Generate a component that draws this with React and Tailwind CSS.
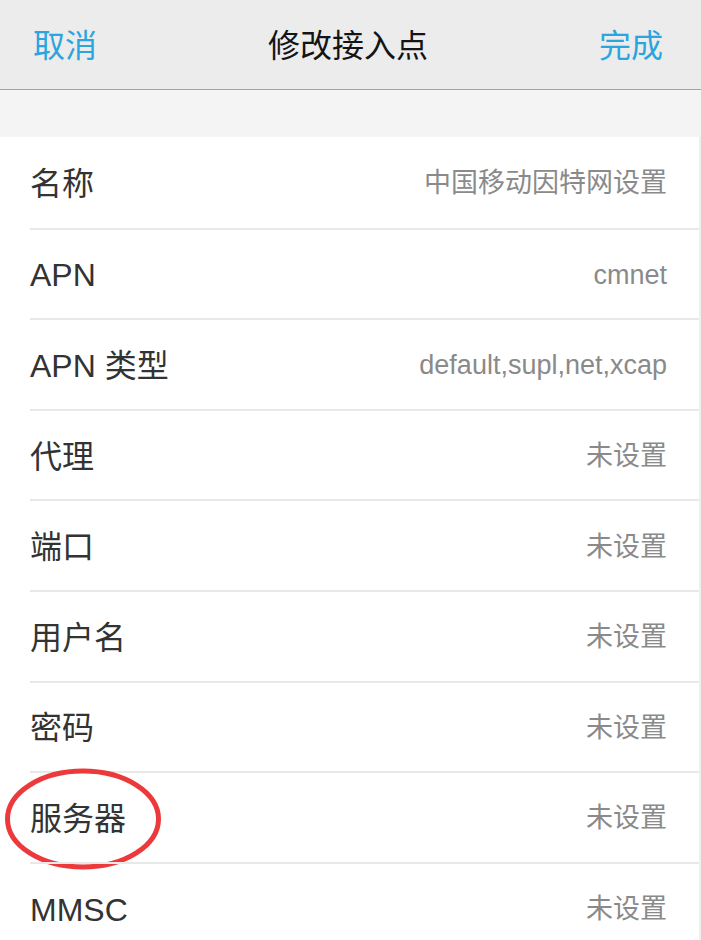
import React from 'react'

const rows = [
  { label: '名称', value: '中国移动因特网设置' },
  { label: 'APN', value: 'cmnet' },
  { label: 'APN 类型', value: 'default,supl,net,xcap' },
  { label: '代理', value: '未设置' },
  { label: '端口', value: '未设置' },
  { label: '用户名', value: '未设置' },
  { label: '密码', value: '未设置' },
  { label: '服务器', value: '未设置', marked: true },
  { label: 'MMSC', value: '未设置' },
]

const font = "font-['Liberation_Sans','Noto_Sans_CJK_SC',sans-serif]"

const App = () => {
  return (
    <div className={`w-[701px] h-[940px] overflow-hidden bg-white ${font}`}>
      {/* Nav bar */}
      <div className='h-[90px] bg-[#ececec] border-b border-[#a3a3a3] flex items-center justify-between pl-[33px] pr-[38px] pt-[2px]'>
        <span className='text-[32px] text-[#2aa5df] leading-none'>取消</span>
        <span className='text-[32px] text-[#141414] leading-none'>修改接入点</span>
        <span className='text-[32px] text-[#2aa5df] leading-none'>完成</span>
      </div>

      {/* Spacer */}
      <div className='h-[47px] bg-[#f4f4f4]' />

      {/* Settings list */}
      <div className='bg-white border-r-2 border-[#efefef]'>
        {rows.map((row, i) => (
          <div key={row.label} className='relative pl-[30px]'>
            <div
              className={`h-[90.6px] flex items-center justify-between pr-[32px] pt-[3px] ${i > 0 ? 'border-t-2 border-[#e8e8e8]' : ''}`}
            >
              <span className='text-[32px] text-[#333333] leading-none'>{row.label}</span>
              <span className='text-[27px] text-[#8a8a8a] leading-none'>{row.value}</span>
            </div>
            {row.marked && (
              <svg
                className='absolute left-[4px] top-[-3px] pointer-events-none'
                width='158'
                height='102'
                viewBox='0 0 158 102'
              >
                <ellipse cx='79' cy='51' rx='75.5' ry='48' fill='none' stroke='#ec3a3c' strokeWidth='5' />
              </svg>
            )}
          </div>
        ))}
      </div>
    </div>
  )
}

export default App
